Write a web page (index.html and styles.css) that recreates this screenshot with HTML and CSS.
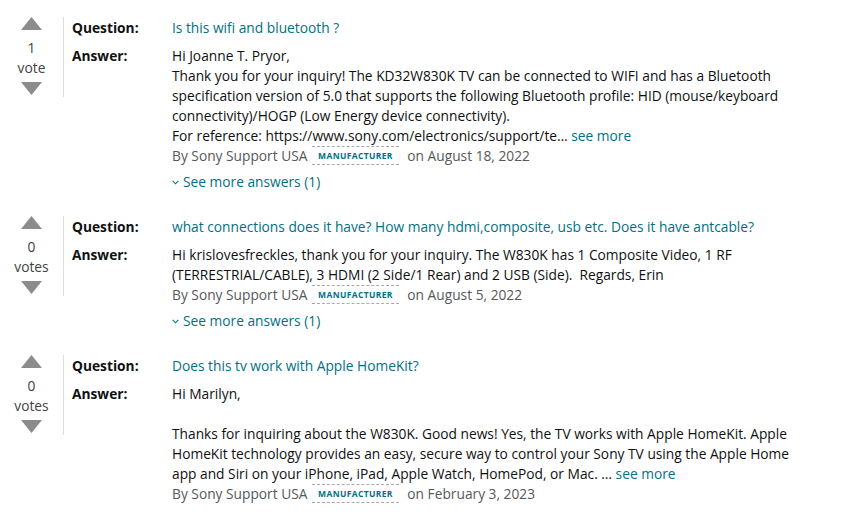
FILE: index.html
```html
<!DOCTYPE html>
<html lang="en">
<head>
<meta charset="utf-8">
<title>Customer questions &amp; answers</title>
<link rel="stylesheet" href="styles.css">
</head>
<body>
<div class="qa-list">

  <div class="qa">
    <div class="vote">
      <svg class="arrow" viewBox="0 0 21 13"><polygon points="10.5,0 21,13 0,13"/></svg>
      <span class="count">1</span>
      <span class="count">vote</span>
      <svg class="arrow down" viewBox="0 0 21 13"><polygon points="0,0 21,0 10.5,13"/></svg>
    </div>
    <div class="content">
      <div class="row q">
        <span class="label">Question:</span>
        <a class="question" href="#">Is this wifi and bluetooth ?</a>
      </div>
      <div class="row a">
        <span class="label">Answer:</span>
        <div class="answer">
          <p>Hi Joanne T. Pryor,<br>Thank you for your inquiry! The KD32W830K TV can be connected to WIFI and has a Bluetooth<br>specification version of 5.0 that supports the following Bluetooth profile: HID (mouse/keyboard<br>connectivity)/HOGP (Low Energy device connectivity).<br>For reference: https://www.sony.com/electronics/support/te… <a class="link" href="#">see more</a></p>
          <p class="byline">By Sony Support USA <span class="badge">Manufacturer</span> on August 18, 2022</p>
        </div>
      </div>
      <a class="more" href="#"><svg class="chev" viewBox="0 0 7 5"><polyline points="0.7,0.8 3.5,3.8 6.3,0.8"/></svg>See more answers (1)</a>
    </div>
  </div>

  <div class="qa">
    <div class="vote">
      <svg class="arrow" viewBox="0 0 21 13"><polygon points="10.5,0 21,13 0,13"/></svg>
      <span class="count">0</span>
      <span class="count">votes</span>
      <svg class="arrow down" viewBox="0 0 21 13"><polygon points="0,0 21,0 10.5,13"/></svg>
    </div>
    <div class="content">
      <div class="row q">
        <span class="label">Question:</span>
        <a class="question" href="#">what connections does it have? How many hdmi,composite, usb etc. Does it have antcable?</a>
      </div>
      <div class="row a">
        <span class="label">Answer:</span>
        <div class="answer">
          <p>Hi krislovesfreckles, thank you for your inquiry. The W830K has 1 Composite Video, 1 RF<br>(TERRESTRIAL/CABLE), 3 HDMI (2 Side/1 Rear) and 2 USB (Side).&nbsp; Regards, Erin</p>
          <p class="byline">By Sony Support USA <span class="badge">Manufacturer</span> on August 5, 2022</p>
        </div>
      </div>
      <a class="more" href="#"><svg class="chev" viewBox="0 0 7 5"><polyline points="0.7,0.8 3.5,3.8 6.3,0.8"/></svg>See more answers (1)</a>
    </div>
  </div>

  <div class="qa">
    <div class="vote">
      <svg class="arrow" viewBox="0 0 21 13"><polygon points="10.5,0 21,13 0,13"/></svg>
      <span class="count">0</span>
      <span class="count">votes</span>
      <svg class="arrow down" viewBox="0 0 21 13"><polygon points="0,0 21,0 10.5,13"/></svg>
    </div>
    <div class="content">
      <div class="row q">
        <span class="label">Question:</span>
        <a class="question" href="#">Does this tv work with Apple HomeKit?</a>
      </div>
      <div class="row a">
        <span class="label">Answer:</span>
        <div class="answer">
          <p>Hi Marilyn,<br><br>Thanks for inquiring about the W830K. Good news! Yes, the TV works with Apple HomeKit. Apple<br>HomeKit technology provides an easy, secure way to control your Sony TV using the Apple Home<br>app and Siri on your iPhone, iPad, Apple Watch, HomePod, or Mac. … <a class="link" href="#">see more</a></p>
          <p class="byline">By Sony Support USA <span class="badge">Manufacturer</span> on February 3, 2023</p>
        </div>
      </div>
    </div>
  </div>

</div>
</body>
</html>
```

FILE: styles.css
```css
* { box-sizing: border-box; }

html, body {
  margin: 0;
  padding: 0;
  background: #ffffff;
}

body {
  font-family: "Open Sans", "Noto Sans", "Liberation Sans", sans-serif;
  font-size: 13.75px;
  line-height: 20px;
  color: #0f1111;
}

.qa-list {
  display: flex;
  flex-direction: column;
  gap: 24px;
  padding: 17px 0 0 8px;
}

.qa {
  display: flex;
  align-items: flex-start;
}

.vote {
  width: 56px;
  padding-right: 8px;
  border-right: 1px solid #dddddd;
  display: flex;
  flex-direction: column;
  align-items: center;
  color: #3f4242;
  padding-bottom: 2px;
}

.arrow {
  width: 21px;
  height: 13px;
  fill: #8c8c8c;
  display: block;
}

.arrow:first-child { margin-bottom: 8px; }
.arrow.down { margin-top: 4px; }

.count {
  display: block;
  line-height: 20px;
}

.content {
  padding-left: 8px;
  padding-top: 1px;
  display: flex;
  flex-direction: column;
}

.row {
  display: flex;
  align-items: flex-start;
}

.row.q { margin-bottom: 8px; }

.label {
  width: 100px;
  flex: none;
  font-weight: 700;
}

.question, .link, .more {
  color: #007185;
  text-decoration: none;
}

.answer p {
  margin: 0;
  white-space: nowrap;
}

.byline {
  color: #565959;
  height: 20px;
}

.badge {
  display: inline-block;
  margin: 0 5px 0 1px;
  padding: 0 6px;
  height: 19px;
  line-height: 17px;
  border-top: 1px dashed #a9a9a9;
  border-bottom: 1px dashed #a9a9a9;
  color: #007185;
  font-size: 8.5px;
  font-weight: 700;
  letter-spacing: 0.35px;
  text-transform: uppercase;
  vertical-align: top;
}

.more {
  display: block;
  margin: 6px 0 0 100px;
  height: 20px;
  line-height: 20px;
}

.chev {
  display: inline-block;
  width: 7px;
  height: 5px;
  margin-right: 4px;
  vertical-align: 2px;
  fill: none;
  stroke: #007185;
  stroke-width: 1.1;
}
```
